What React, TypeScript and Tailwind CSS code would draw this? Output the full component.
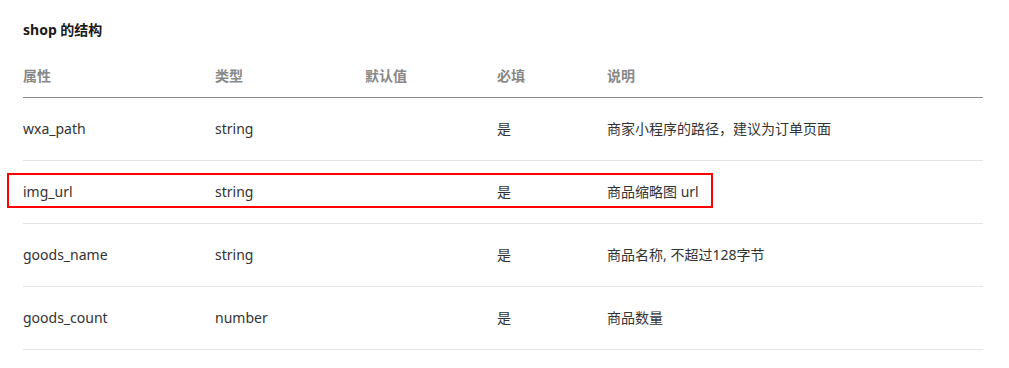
const rows = [
  { name: 'wxa_path', type: 'string', def: '', req: '是', desc: '商家小程序的路径，建议为订单页面' },
  { name: 'img_url', type: 'string', def: '', req: '是', desc: '商品缩略图 url' },
  { name: 'goods_name', type: 'string', def: '', req: '是', desc: '商品名称, 不超过128字节' },
  { name: 'goods_count', type: 'number', def: '', req: '是', desc: '商品数量' },
]

const cols = 'grid grid-cols-[192px_150px_132px_110px_1fr]'

export default function App() {
  return (
    <div
      className="relative w-[1009px] h-[368px] bg-white px-[23px] pt-[20px] text-[14px] text-[#333]"
      style={{ fontFamily: '"Noto Sans", "Noto Sans CJK SC", sans-serif' }}
    >
      <h3 className="h-[20px] leading-[20px] font-bold text-[#1a1a1a]">shop 的结构</h3>
      <div className="mt-[15px] w-[960px]">
        <div className={`${cols} h-[43px] pb-[2px] items-center border-b border-[#8c8c8c] font-bold text-[#888]`}>
          <div>属性</div>
          <div>类型</div>
          <div>默认值</div>
          <div>必填</div>
          <div>说明</div>
        </div>
        {rows.map((r) => (
          <div key={r.name} className={`${cols} h-[63px] pb-[2px] items-center border-b border-[#e5e5e5]`}>
            <div>{r.name}</div>
            <div>{r.type}</div>
            <div>{r.def}</div>
            <div>{r.req}</div>
            <div>{r.desc}</div>
          </div>
        ))}
      </div>
      {/* 标注框 */}
      <div className="absolute left-[7px] top-[173px] w-[706px] h-[35px] border-2 border-[#ff0000]" />
    </div>
  )
}
